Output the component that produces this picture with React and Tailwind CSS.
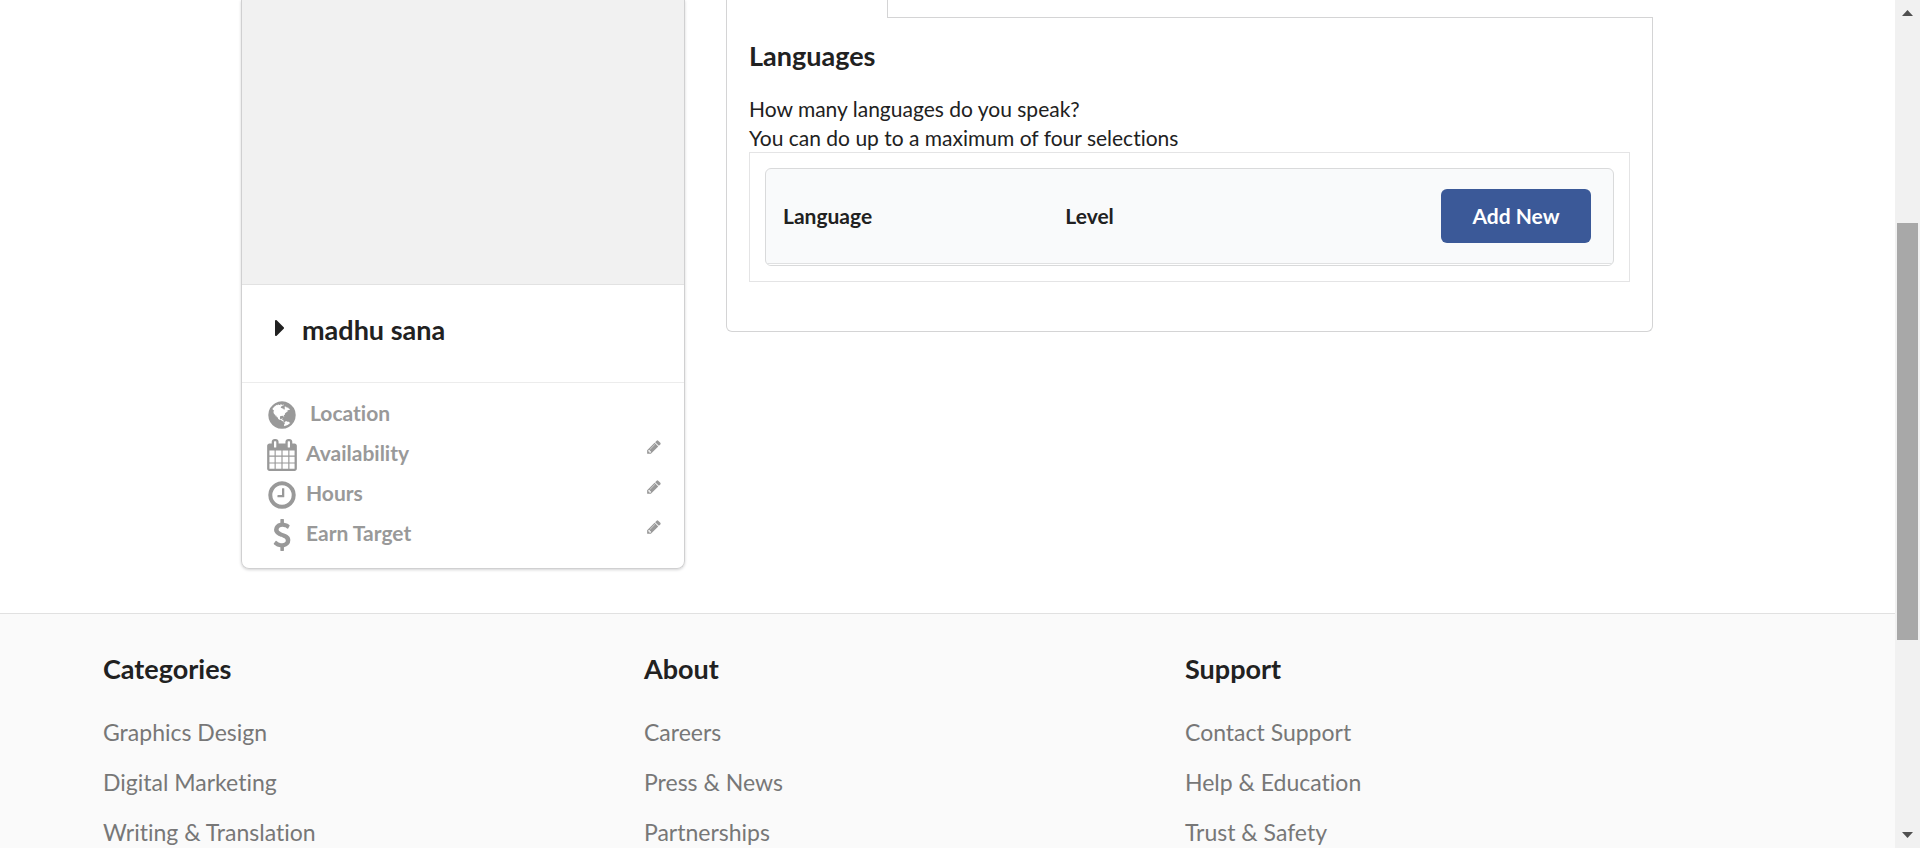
const ICONS = {
  caret:
    "M1152 896q0 26-19 45l-448 448q-19 19-45 19t-45-19-19-45v-896q0-26 19-45t45-19 45 19l448 448q19 19 19 45z",
  globe:
    "M896 128q209 0 385.500 103t279.500 279.500 103 385.500-103 385.500-279.500 279.500-385.500 103-385.500-103-279.500-279.500-103-385.500 103-385.500 279.500-279.500 385.500-103zm274 521q-2 1-9.500 9.500t-13.500 9.500q2 0 4.500-5t5-11 3.500-7q6-7 22-15 14-6 52-12 34-8 51 11-2-2 9.500-13t14.500-12q3-2 15-4.500t15-7.500l2-22q-12 1-17.500-7t-6.500-21q0 2-6 8 0-7-4.500-8t-11.500 1-9 1q-10-3-15-7.500t-8-16.500-4-15q-2-5-9.500-11t-9.500-10q-1-2-2.500-5.500t-3-6.500-4-5.500-5.500-2.500-7 5-7.500 10-4.500 5q-3-2-6-1.500t-4.500 1-4.500 3-5 3.500q-3 2-8.500 3t-8.500 2q15-5-1-11-10-4-16-3 9-4 7.500-12t-8.500-14h5q-1-4-8.500-8.500t-17.500-8.500-13-6q-8-5-34-9.500t-33-.5q-5 6-4.500 10.500t4 14 3.500 12.500q1 6-5.500 13t-6.500 12q0 7 14 15.500t10 21.500q-3 8-16 16t-16 12q-5 8-1.500 18.500t10.500 16.500q2 2 1.500 4t-3.500 4.500-5.500 4-6.500 3.500l-3 2q-11 5-20.500-6t-13.500-26q-7-25-16-30-23-8-29 1-5-13-41-26-25-9-58-4 6-1 0-15-7-15-19-12 3-6 4-17.500t1-13.500q3-13 12-23 1-1 7-8.500t9.500-13.500.5-6q35 4 50-11 5-5 11.500-17t10.500-17q9-6 14-5.500t14.500 5.500 14.500 5q14 1 15.500-11t-7.500-20q12 1 3-17-4-7-8-9-12-4-27 5-8 4 2 8-1-1-9.500 10.500t-16.500 17.500-16-5q-1-1-5.500-13.500t-9.500-13.500q-8 0-16 15 3-8-11-15t-24-8q19-12-8-27-7-4-20.500-5t-19.500 4q-5 7-5.500 11.500t5 8 10.500 5.500 11.500 4 8.500 3q14 10 8 14-2 1-8.500 3.500t-11.500 4.500-6 4q-3 4 0 14t-2 14q-5-5-9-17.500t-7-16.500q7 9-25 6l-10-1q-4 0-16 2t-20.500 1-13.500-8q-4-8 0-20 1-4 4-2-4-3-11-9.500t-10-8.500q-46 15-94 41 6 1 12-1 5-2 13-6.500t10-5.500q34-14 42-7l5-5q14 16 20 25-7-4-30-1-20 6-22 12 7 12 5 18-4-3-11.500-10t-14.500-11-15-5q-16 0-22 1-146 80-235 222 7 7 12 8 4 1 5 9t2.500 11 11.500-3q9 8 3 19 1-1 44 27 19 17 21 21 3 11-10 18-1-2-9-9t-9-4q-3 5 .5 18.500t10.500 12.500q-7 0-9.500 16t-2.500 35.500-1 23.500l2 1q-3 12 5.500 34.500t21.500 19.500q-13 3 20 43 6 8 8 9 3 2 12 7.500t15 10 10 10.500q4 5 10 22.500t14 23.500q-2 6 9.500 20t10.500 23q-1 0-2.500 1t-2.500 1q3 7 15.500 14t15.500 13q1 3 2 10t3 11 8 2q2-20-24-62-15-25-17-29-3-5-5.500-15.500t-4.500-14.500q2 0 6 1.500t8.500 3.500 7.500 4 2 3q-3 7 2 17.500t12 18.500 17 19 12 13q6 6 14 19.500t0 13.500q9 0 20 10t17 20q5 8 8 26t5 24q2 7 8.500 13.500t12.500 9.500l16 8 13 7q5 2 18.500 10.500t21.500 11.500q10 4 16 4t14.500-2.500 13.500-3.500q15-2 29 15t21 21q36 19 55 11-2 1 .5 7.500t8 15.500 9 14.500 5.500 8.500q5 6 18 15t18 15q6-4 7-9-3 8 7 20t18 10q14-3 14-32-31 15-49-18 0-1-2.500-5.500t-4-8.500-2.500-8.500 0-7.500 5-3q9 0 10-3.500t-2-12.500-4-13q-1-8-11-20t-12-15q-5 9-16 8t-16-9q0 1-1.500 5.500t-1.500 6.500q-13 0-15-1 1-3 2.500-17.500t3.500-22.500q1-4 5.500-12t7.500-14.500 4-12.500-4.500-9.500-17.500-2.500q-19 1-26 20-1 3-3 10.500t-5 11.500-9 7q-7 3-24 2t-24-5q-13-8-22.500-29t-9.500-37q0-10 2.500-26.500t3-25-5.500-24.500q3-2 9-9.500t10-10.500q2-1 4.500-1.500t4.500 0 4-1.500 3-6q-1-1-4-3-3-3-4-3 7 3 28.500-1.500t27.500 1.500q15 11 22-2 0-1-2.500-9.500t-.5-13.500q5 27 29 9 3 3 15.500 5t17.500 5q3 2 7 5.500t5.500 4.500 5-.5 8.500-6.500q10 14 12 24 11 40 19 44 7 3 11 2t4.500-9.500 0-14-1.500-12.500l-1-8v-18l-1-8q-15-3-18.500-12t1.500-18.500 15-18.500q1-1 8-3.500t15.500-6.500 12.500-8q21-19 15-35 7 0 11-9-1 0-5-3t-7.500-5-4.500-2q9-5 2-16 5-3 7.500-11t7.500-10q9 12 21 2 8-8 1-16 5-7 20.500-10.500t18.500-9.500q7 2 8-2t1-12 3-12q4-5 15-9t13-5l17-11q3-4 0-4 18 2 31-11 10-11-6-20 3-6-3-9.500t-15-5.500q3-1 11.500-.5t10.500-1.500q15-10-7-16-17-5-43 12zm-163 877q206-36 351-189-3-3-12.500-4.500t-12.500-3.500q-18-7-24-8 1-7-2.500-13t-8-9-12.500-8-11-7q-2-2-7-6t-7-5.500-7.500-4.500-8.500-2-10 1l-3 1q-3 1-5.500 2.500t-5.500 3-4 3 0 2.500q-21-17-36-22-5-1-11-5.500t-10.500-7-10-1.500-11.500 7q-5 5-6 15t-2 13q-7-5 0-17.500t2-18.500q-3-6-10.500-4.500t-12 4.500-11.500 8.500-9 6.500-8.500 5.500-8.500 7.500q-3 4-6 12t-5 11q-2-4-11.500-6.500t-9.500-5.500q2 10 4 35t5 38q7 31-12 48-27 25-29 40-4 22 12 26 0 7-8 20.500t-7 21.500q0 6 2 16z",
  calendar:
    "M192 1664h288v-288h-288v288zm352 0h320v-288h-320v288zm-352-352h288v-320h-288v320zm352 0h320v-320h-320v320zm-352-384h288v-288h-288v288zm736 736h320v-288h-320v288zm-384-736h320v-288h-320v288zm768 736h288v-288h-288v288zm-384-352h320v-320h-320v320zm-352-864v-288q0-13-9.500-22.500t-22.500-9.500h-64q-13 0-22.500 9.500t-9.500 22.500v288q0 13 9.500 22.500t22.500 9.500h64q13 0 22.500-9.500t9.500-22.500zm736 864h288v-320h-288v320zm-384-384h320v-288h-320v288zm384 0h288v-288h-288v288zm32-480v-288q0-13-9.500-22.500t-22.500-9.500h-64q-13 0-22.500 9.500t-9.500 22.500v288q0 13 9.500 22.500t22.500 9.500h64q13 0 22.500-9.500t9.500-22.500zm384-64v1280q0 52-38 90t-90 38h-1408q-52 0-90-38t-38-90v-1280q0-52 38-90t90-38h128v-96q0-66 47-113t113-47h64q66 0 113 47t47 113v96h384v-96q0-66 47-113t113-47h64q66 0 113 47t47 113v96h128q52 0 90 38t38 90z",
  clock:
    "M1024 544v448q0 14-9 23t-23 9h-320q-14 0-23-9t-9-23v-64q0-14 9-23t23-9h224v-352q0-14 9-23t23-9h64q14 0 23 9t9 23zm416 352q0-148-73-273t-198-198-273-73-273 73-198 198-73 273 73 273 198 198 273 73 273-73 198-198 73-273zm224 0q0 209-103 385.500t-279.500 279.500-385.500 103-385.500-103-279.500-279.500-103-385.500 103-385.500 279.500-279.500 385.500-103 385.500 103 279.500 279.500 103 385.500z",
  dollar:
    "M1362 1185q0 153-99.500 263.500t-258.500 136.500v175q0 14-9 23t-23 9h-135q-13 0-22.500-9.500t-9.500-22.500v-175q-66-9-127.500-31t-101.500-44.500-74-48-46.500-37.500-17.500-18q-17-21-2-41l103-135q7-10 23-12 15-2 24 9l2 2q113 99 243 125 37 8 74 8 81 0 142.500-43t61.500-122q0-28-15-53t-33.500-42-58.500-37.500-66-32-80-32.500q-39-16-61.500-25t-61.500-26.500-62.500-31-56.500-35.500-53.500-42.500-43.500-49-35.500-58-21-66.500-8.500-78q0-138 98-242t255-134v-180q0-13 9.500-22.500t22.500-9.500h135q14 0 23 9t9 23v176q57 6 110.500 23t87 33.500 63.500 37.500 39 29 15 14q17 18 5 38l-81 146q-8 15-23 16-14 3-27-7-3-3-14.500-12t-39-26.500-58.500-32-74.500-26-85.500-11.500q-95 0-155 43t-60 111q0 26 8.500 48t29.500 41.500 39.500 33 56 31 60.500 27 70 27.500q53 20 81 31.500t76 35 75.500 42.500 62 50 53 63.500 31.500 76.500 13 94z",
  pencil:
    "M491 1536l91-91-235-235-91 91v107h128v128h107zm523-928q0-22-22-22-10 0-17 7l-542 542q-7 7-7 17 0 22 22 22 10 0 17-7l542-542q7-7 7-17zm-54-192l416 416-832 832h-416v-416zm683 96q0 53-37 90l-166 166-416-416 166-165q36-38 90-38 53 0 91 38l235 234q37 39 37 91z",
};

function Icon({ name, className }) {
  return (
    <svg viewBox="0 0 1792 1792" fill="currentColor" aria-hidden="true" className={className}>
      <path d={ICONS[name]} />
    </svg>
  );
}

const DETAILS = [
  { icon: "globe", label: "Location", editable: false },
  { icon: "calendar", label: "Availability", editable: true },
  { icon: "clock", label: "Hours", editable: true },
  { icon: "dollar", label: "Earn Target", editable: true },
];

const FOOTER = [
  { title: "Categories", links: ["Graphics Design", "Digital Marketing", "Writing & Translation"] },
  { title: "About", links: ["Careers", "Press & News", "Partnerships"] },
  { title: "Support", links: ["Contact Support", "Help & Education", "Trust & Safety"] },
];

function ProfileCard() {
  return (
    <section className="w-[444px] shrink-0 overflow-hidden rounded-b-lg border border-t-0 border-[#d0d0d1] shadow-[0_1px_3px_#d4d4d5]">
      <div className="h-[284px] bg-[#f1f1f1]" />
      <div className="flex h-[98px] items-center border-t border-[#e2e2e2] pb-2 pl-6">
        <button type="button" aria-label="Expand name" className="flex w-9 items-center pb-1">
          <Icon name="caret" className="size-7" />
        </button>
        <h2 className="text-[27px] leading-9 font-bold">madhu sana</h2>
      </div>
      <ul className="border-t border-[#ececec] pt-2.5 pb-[15px] text-[#999]">
        {DETAILS.map(({ icon, label, editable }) => (
          <li key={label} className="flex h-[40px] items-center pr-[22px] pl-6">
            <Icon name={icon} className="mt-1 size-8" />
            <span className={editable ? "ml-2 text-[21px] font-bold" : "ml-3 text-[21px] font-bold"}>{label}</span>
            {editable && (
              <button type="button" aria-label={`Edit ${label}`} className="mb-3 ml-auto">
                <Icon name="pencil" className="size-4" />
              </button>
            )}
          </li>
        ))}
      </ul>
    </section>
  );
}

function LanguagesPanel() {
  return (
    <section className="mr-[242px] ml-[41px] flex-1">
      <div className="flex h-[18px]">
        <div className="w-[161px] border-l border-[#d4d4d5]" />
        <div className="flex-1 border-b border-l border-[#d4d4d5]" />
      </div>
      <div className="rounded-b-md border border-t-0 border-[#d4d4d5] px-[22px] pt-5 pb-[49px]">
        <h2 className="text-[27px] leading-9 font-bold">Languages</h2>
        <p className="mt-5 text-[21px] leading-[29px]">
          How many languages do you speak?
          <br />
          You can do up to a maximum of four selections
        </p>
        <div className="border border-[#e4e4e5] p-[15px]">
          <div className="overflow-hidden rounded-md border border-[#d9dadb] bg-[#f9fafb]">
            <table className="w-full table-fixed border-b border-[#e0e1e2] text-left text-[21px]">
              <thead>
                <tr className="h-[94px]">
                  <th className="pl-[17px] font-bold">Language</th>
                  <th className="pl-[17px] font-bold">Level</th>
                  <th className="pr-[22px] text-right">
                    <button type="button" className="h-[54px] w-[150px] rounded-md bg-[#3b5998] text-[21px] font-bold text-white">
                      Add New
                    </button>
                  </th>
                </tr>
              </thead>
            </table>
            <div className="h-px bg-white" />
          </div>
        </div>
      </div>
    </section>
  );
}

function Footer() {
  return (
    <footer className="mt-[44px] grid grid-cols-3 border-t border-[#e1e1e1] bg-[#fafafa] pt-[37px] pr-[169px] pb-8 pl-[103px]">
      {FOOTER.map(({ title, links }) => (
        <nav key={title} aria-label={title}>
          <h3 className="text-[27px] leading-9 font-bold">{title}</h3>
          <ul className="mt-5">
            {links.map((link) => (
              <li key={link} className="flex h-[50px] items-center">
                <a href="#" className="text-[23px] text-[#777]">
                  {link}
                </a>
              </li>
            ))}
          </ul>
        </nav>
      ))}
    </footer>
  );
}

function ScrollTrack() {
  return (
    <div aria-hidden="true" className="flex w-[25px] shrink-0 flex-col items-center bg-[#f1f1f1] text-[#505050]">
      <svg viewBox="0 0 25 25" className="size-[25px]" fill="currentColor">
        <path d="M7 16h11l-5.500-6z" />
      </svg>
      <div className="flex w-full flex-1 flex-col px-0.5">
        <div className="grow-[198]" />
        <div className="grow-[417] bg-[#a8a8a8]" />
        <div className="grow-[183]" />
      </div>
      <svg viewBox="0 0 25 25" className="size-[25px]" fill="currentColor">
        <path d="M7 9h11l-5.500 6z" />
      </svg>
    </div>
  );
}

export default function App() {
  return (
    <div className="flex h-screen overflow-hidden bg-white font-[Lato,sans-serif] text-[#212121] [font-variant-ligatures:none]">
      <div className="min-w-0 flex-1">
        <main className="flex items-start pl-[241px]">
          <ProfileCard />
          <LanguagesPanel />
        </main>
        <Footer />
      </div>
      <ScrollTrack />
    </div>
  );
}
